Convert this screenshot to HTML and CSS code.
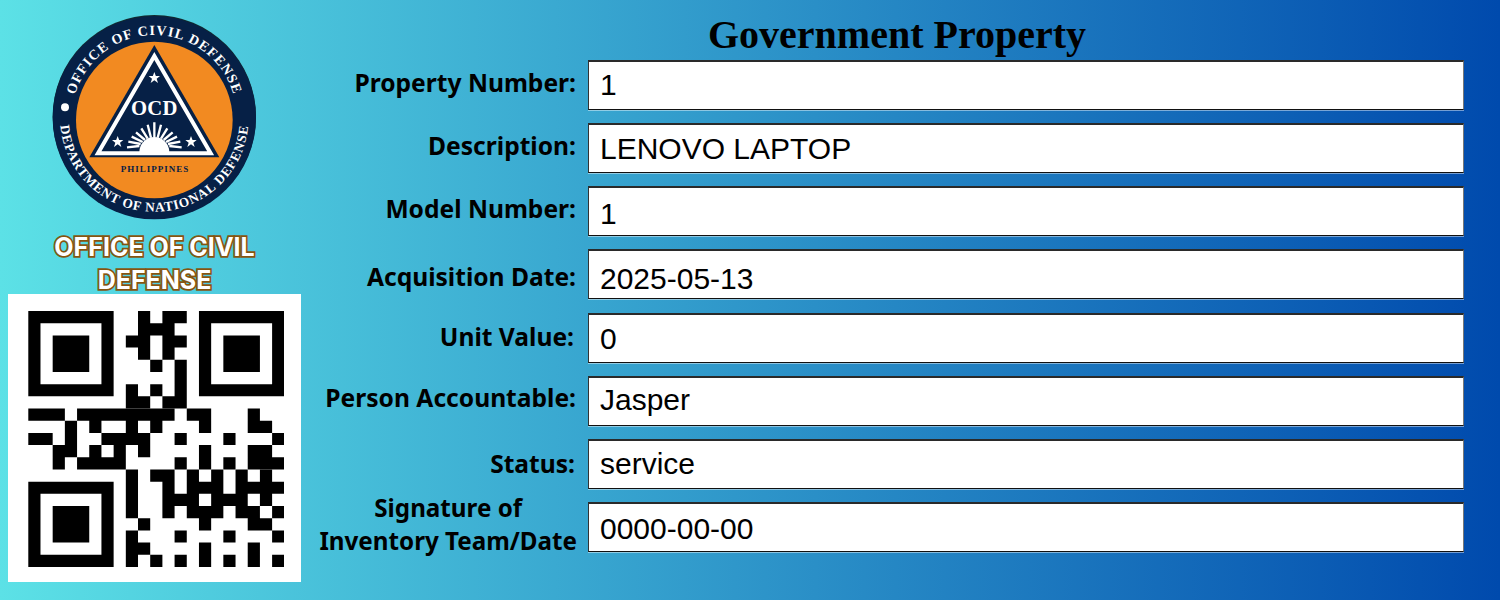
FILE: index.html
```html
<!DOCTYPE html>
<html lang="en">
<head>
<meta charset="utf-8">
<title>Government Property</title>
<link rel="stylesheet" href="styles.css">
</head>
<body>
<div class="card">
  <aside class="side">
    <svg class="logo" viewBox="0 0 690 690" aria-label="Office of Civil Defense seal">
      <defs>
        <path id="arcTop" d="M96 352 A247 247 0 0 1 590 352"/>
        <path id="arcBottom" d="M60 352 A283 283 0 0 0 626 352"/>
      </defs>
      <circle cx="343" cy="350" r="305" fill="#000" opacity=".8"/>
      <circle cx="343" cy="353" r="305" fill="#062046"/>
      <circle cx="343" cy="360" r="235" fill="#f28a21"/>
      <polygon points="343,135 148,472 538,472" fill="#062046"/>
      <polygon points="343,168 174,460 512,460" fill="none" stroke="#fff" stroke-width="12"/>
      <circle cx="75" cy="322" r="12" fill="#fff"/>
      <text class="arc-text"><textPath href="#arcTop" startOffset="50%" text-anchor="middle">OFFICE OF CIVIL DEFENSE</textPath></text>
      <text class="arc-text arc-low"><textPath href="#arcBottom" startOffset="50%" text-anchor="middle">DEPARTMENT OF NATIONAL DEFENSE</textPath></text>
      <polygon class="star" points="343,216 347.5,228 360,228 350,236 354,249 343,241 332,249 336,236 326,228 338.5,228"/>
      <polygon class="star" points="233,408 237.5,420 250,420 240,428 244,441 233,433 222,441 226,428 216,420 228.5,420"/>
      <polygon class="star" points="453,408 457.5,420 470,420 460,428 464,441 453,433 442,441 446,428 436,420 448.5,420"/>
      <text class="ocd" x="343" y="346" text-anchor="middle">OCD</text>
      <path class="rays" d="M261 442L298 438M265 425L302 432M275 410L308 426M288 397L315 420M304 385L323 416M323 374L333 413M343 367V412M363 374L353 413M382 385L363 416M398 397L371 420M411 410L378 426M421 425L384 432M425 442L388 438"/>
      <path class="sun" d="M255 456 H298 A45 45 0 0 1 388 456 H431 V458 H255 Z"/>
      <text class="phil" x="345" y="516" text-anchor="middle">PHILIPPINES</text>
    </svg>
    <h2 class="agency">OFFICE OF CIVIL<br>DEFENSE</h2>
    <div class="qr-box">
      <svg class="qr" viewBox="0 0 21 21" aria-label="QR code">
        <path d="M0 0h7v7h-7zM1 1v5h5v-5zM2 2h3v3h-3z" fill-rule="evenodd"/>
        <path d="M14 0h7v7h-7zM15 1v5h5v-5zM16 2h3v3h-3z" fill-rule="evenodd"/>
        <path d="M0 14h7v7h-7zM1 15v5h5v-5zM2 16h3v3h-3z" fill-rule="evenodd"/>
        <path d="M9 0h1v1h-1zM11 0h2v1h-2zM9 1h3v1h-3zM8 2h2v1h-2zM11 2h2v1h-2zM9 3h1v1h-1zM11 3h1v1h-1zM10 4h1v1h-1zM12 4h1v1h-1zM12 5h1v1h-1zM8 6h1v1h-1zM10 6h1v1h-1zM12 6h1v1h-1zM8 7h2v1h-2zM11 7h2v1h-2z"/>
        <path d="M0 8h3v1h-3zM4 8h8v1h-8zM13 8h2v1h-2zM18 8h1v1h-1zM3 9h1v1h-1zM5 9h1v1h-1zM8 9h1v1h-1zM10 9h1v1h-1zM14 9h1v1h-1zM18 9h2v1h-2zM0 10h2v1h-2zM3 10h1v1h-1zM6 10h4v1h-4zM12 10h1v1h-1zM16 10h1v1h-1zM20 10h1v1h-1zM2 11h2v1h-2zM5 11h1v1h-1zM7 11h1v1h-1zM9 11h1v1h-1zM14 11h1v1h-1zM18 11h2v1h-2zM2 12h1v1h-1zM4 12h4v1h-4zM12 12h1v1h-1zM14 12h1v1h-1zM16 12h1v1h-1zM18 12h3v1h-3z"/>
        <path d="M8 13h1v1h-1zM10 13h2v1h-2zM13 13h1v1h-1zM15 13h1v1h-1zM17 13h1v1h-1zM19 13h1v1h-1zM8 14h1v1h-1zM11 14h1v1h-1zM13 14h3v1h-3zM17 14h4v1h-4zM8 15h1v1h-1zM11 15h3v1h-3zM15 15h3v1h-3zM19 15h1v1h-1zM8 16h1v1h-1zM11 16h1v1h-1zM13 16h3v1h-3zM17 16h2v1h-2zM20 16h1v1h-1zM9 17h1v1h-1zM14 17h1v1h-1zM18 17h2v1h-2zM8 18h1v1h-1zM12 18h1v1h-1zM16 18h1v1h-1zM20 18h1v1h-1zM8 19h2v1h-2zM14 19h1v1h-1zM18 19h1v1h-1zM8 20h1v1h-1zM10 20h1v1h-1zM12 20h1v1h-1zM14 20h1v1h-1zM16 20h1v1h-1zM18 20h1v1h-1zM20 20h1v1h-1z"/>
      </svg>
    </div>
  </aside>
  <main class="panel">
    <h1 class="title">Government Property</h1>
    <div class="fields">
      <div class="label r1">Property Number:</div><div class="value r1">1</div>
      <div class="label r2">Description:</div><div class="value r2">LENOVO LAPTOP</div>
      <div class="label r3">Model Number:</div><div class="value r3">1</div>
      <div class="label r4">Acquisition Date:</div><div class="value r4">2025-05-13</div>
      <div class="label r5">Unit Value:</div><div class="value r5">0</div>
      <div class="label r6">Person Accountable:</div><div class="value r6">Jasper</div>
      <div class="label r7">Status:</div><div class="value r7">service</div>
      <div class="label label-two r8">Signature of<br>Inventory Team/Date</div><div class="value r8">0000-00-00</div>
    </div>
  </main>
</div>
</body>
</html>
```
FILE: styles.css
```css
* { box-sizing: border-box; }
html, body { margin: 0; height: 100%; }
body { overflow: hidden; }
.card {
  width: 1500px;
  height: 600px;
  display: flex;
  background: linear-gradient(90deg, #5ce1e6 0%, #004aad 100%);
}
.side {
  width: 308px;
  flex: none;
  padding-left: 8px;
  display: flex;
  flex-direction: column;
  align-items: flex-start;
}
.logo {
  width: 230px;
  height: 230px;
  margin-left: 32px;
  flex: none;
}
.arc-text {
  font: 700 42px "Liberation Serif", serif;
  letter-spacing: 3.5px;
  fill: #fff;
}
.arc-low { font-size: 40px; letter-spacing: 2.7px; }
.ocd {
  font: 700 62px "Liberation Serif", serif;
  letter-spacing: 1px;
  fill: #fff;
}
.phil {
  font: 700 27px "Liberation Serif", serif;
  letter-spacing: 3px;
  fill: #062046;
}
.star, .sun { fill: #fff; }
.rays { stroke: #fff; stroke-width: 7; fill: none; }
.agency {
  width: 293px;
  margin: 0;
  height: 64px;
  padding-top: 1px;
  text-align: center;
  font: 700 25px/33px Inter, sans-serif;
  color: #fff;
  -webkit-text-stroke: 3.5px #855510;
  paint-order: stroke fill;
}
.qr-box {
  width: 293px;
  height: 288px;
  background: #fff;
  padding: 17px 16.7px 15px 19.7px;
}
.qr { display: block; width: 256.6px; height: 256px; }
.panel { flex: 1; min-width: 0; display: flex; flex-direction: column; }
.title {
  margin: 0;
  height: 60px;
  padding: 10px 14px 0 0;
  text-align: center;
  font: 700 40px/50px "Liberation Serif", serif;
  color: #000;
}
.fields {
  display: grid;
  grid-template-columns: 269px 876px;
  grid-auto-rows: 50px;
  column-gap: 11px;
  row-gap: 13.14px;
}
.label {
  display: flex;
  align-items: center;
  justify-content: flex-end;
  padding-right: 1px;
  font: 700 24.6px/33px "Noto Sans", sans-serif;
  color: #000;
  white-space: nowrap;
}
.label-two { text-align: center; font-size: 24.2px; padding-right: 0; }
.label.r1, .label.r2, .label.r3, .label.r8 { padding-bottom: 6px; }
.label.r4 { padding-top: 4px; }
.label.r5 { padding-bottom: 2px; padding-right: 3px; }
.label.r6 { padding-bottom: 6px; }
.label.r7 { padding-right: 2px; }
.value {
  display: flex;
  align-items: center;
  padding-left: 11px;
  background: #fff;
  border-style: solid;
  border-width: 2px 1px 1px 1px;
  border-color: #2a2a2a #777 #111 #333;
  box-shadow: 0 1px 0 rgba(255,255,255,.45);
  font: 30px "Liberation Sans", Arial, sans-serif;
  color: #000;
}
.value.r1, .value.r7 { padding-bottom: 1px; }
.value.r2, .value.r5 { padding-top: 1px; }
.value.r3 { padding-top: 5px; }
.value.r4 { padding-top: 9px; }
.value.r6 { padding-bottom: 3px; }
.value.r8 { padding-top: 3px; }
```
